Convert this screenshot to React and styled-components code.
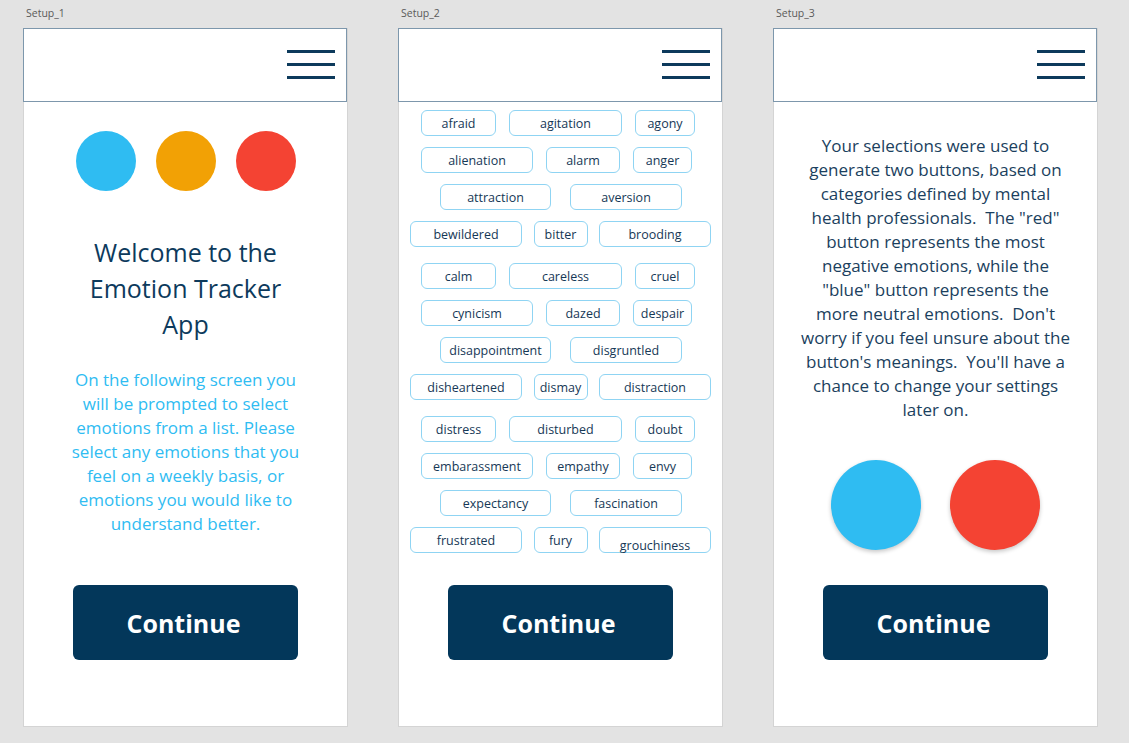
import React from "react";
import styled, { createGlobalStyle } from "styled-components";

const GlobalStyle = createGlobalStyle`
  html, body {
    margin: 0;
    padding: 0;
    background: #e3e3e3;
  }
  body {
    font-family: "Open Sans", "Noto Sans", sans-serif;
  }
`;

const navy = "#0d3a5c";
const sky = "#2fbcf2";

const emotionGroups = [
  [
    ["afraid", "agitation", "agony"],
    ["alienation", "alarm", "anger"],
    ["attraction", "aversion"],
    ["bewildered", "bitter", "brooding"],
  ],
  [
    ["calm", "careless", "cruel"],
    ["cynicism", "dazed", "despair"],
    ["disappointment", "disgruntled"],
    ["disheartened", "dismay", "distraction"],
  ],
  [
    ["distress", "disturbed", "doubt"],
    ["embarassment", "empathy", "envy"],
    ["expectancy", "fascination"],
    ["frustrated", "fury", "grouchiness"],
  ],
];

// each row pattern repeats in every group: left padding, gap, chip widths
const rowShapes = [
  { pad: 22, gap: 13, widths: [75, 113, 60] },
  { pad: 22, gap: 13, widths: [112, 74, 59] },
  { pad: 41, gap: 19, widths: [111, 112] },
  { pad: 11, gap: 11.5, widths: [112, 54, 112] },
];

function Header() {
  return (
    <TopBar>
      <Burger aria-label="menu">
        <span />
        <span />
        <span />
      </Burger>
    </TopBar>
  );
}

function ContinueButton() {
  return <Continue>Continue</Continue>;
}

function App() {
  return (
    <>
      <GlobalStyle />
      <Canvas>
        <Screen>
          <Label>Setup_1</Label>
          <Frame>
            <Header />
            <Body>
              <Dots>
                <Dot color={sky} />
                <Dot color="#f2a105" />
                <Dot color="#f44333" />
              </Dots>
              <Title>
                Welcome to the
                <br />
                Emotion Tracker
                <br />
                App
              </Title>
              <Intro>
                On the following screen you
                <br />
                will be prompted to select
                <br />
                emotions from a list. Please
                <br />
                select any emotions that you
                <br />
                feel on a weekly basis, or
                <br />
                emotions you would like to
                <br />
                understand better.
              </Intro>
              <ContinueButton />
            </Body>
          </Frame>
        </Screen>

        <Screen>
          <Label>Setup_2</Label>
          <Frame>
            <Header />
            <Body>
              <ChipList>
                {emotionGroups.map((group, gi) => (
                  <ChipGroup key={gi}>
                    {group.map((row, ri) => (
                      <ChipRow
                        key={ri}
                        pad={rowShapes[ri].pad}
                        gap={rowShapes[ri].gap}
                      >
                        {row.map((word, wi) => (
                          <Chip
                            key={word}
                            w={rowShapes[ri].widths[wi]}
                            low={word === "grouchiness"}
                          >
                            {word}
                          </Chip>
                        ))}
                      </ChipRow>
                    ))}
                  </ChipGroup>
                ))}
              </ChipList>
              <ContinueButton />
            </Body>
          </Frame>
        </Screen>

        <Screen>
          <Label>Setup_3</Label>
          <Frame>
            <Header />
            <Body>
              <Explain>
                Your selections were used to
                <br />
                generate two buttons, based on
                <br />
                categories defined by mental
                <br />
                health professionals.&nbsp; The "red"
                <br />
                button represents the most
                <br />
                negative emotions, while the
                <br />
                "blue" button represents the
                <br />
                more neutral emotions.&nbsp; Don't
                <br />
                worry if you feel unsure about the
                <br />
                button's meanings.&nbsp; You'll have a
                <br />
                chance to change your settings
                <br />
                later on.
              </Explain>
              <BigDots>
                <BigDot color={sky} />
                <BigDot color="#f44333" />
              </BigDots>
              <ContinueButton />
            </Body>
          </Frame>
        </Screen>
      </Canvas>
    </>
  );
}

const Canvas = styled.div`
  display: flex;
  gap: 50px;
  padding: 0 0 0 23px;
  height: 743px;
  box-sizing: border-box;
`;

const Screen = styled.div`
  display: flex;
  flex-direction: column;
  width: 325px;
  flex-shrink: 0;
`;

const Label = styled.div`
  height: 28px;
  box-sizing: border-box;
  padding: 6px 0 0 3px;
  font-size: 10.5px;
  line-height: 14px;
  color: #5a5a5a;
`;

const Frame = styled.div`
  height: 699px;
  box-sizing: border-box;
  background: #ffffff;
  border: 1px solid #d4d4d4;
  border-top: none;
  display: flex;
  flex-direction: column;
`;

const TopBar = styled.div`
  height: 74px;
  box-sizing: border-box;
  margin: 0 0 0 -1px;
  border: 1px solid #7d97ac;
  background: #ffffff;
  display: flex;
  justify-content: flex-end;
  padding: 21px 11px 0 0;
`;

const Burger = styled.div`
  width: 48px;
  display: flex;
  flex-direction: column;
  gap: 10px;
  span {
    display: block;
    height: 3px;
    background: ${navy};
  }
`;

const Body = styled.div`
  flex: 1;
  display: flex;
  flex-direction: column;
  align-items: center;
  padding-bottom: 66px;
`;

const Dots = styled.div`
  display: flex;
  gap: 20px;
  margin-top: 29px;
`;

const Dot = styled.div`
  width: 60px;
  height: 60px;
  border-radius: 50%;
  background: ${(p) => p.color};
`;

const Title = styled.h1`
  margin: 43px 0 0;
  font-size: 25px;
  line-height: 36px;
  font-weight: 400;
  color: ${navy};
  text-align: center;
  white-space: nowrap;
`;

const Intro = styled.p`
  margin: 26px 0 0;
  font-size: 17px;
  line-height: 24px;
  color: ${sky};
  text-align: center;
  white-space: nowrap;
`;

const Explain = styled.p`
  margin: 32px 0 0;
  font-size: 17px;
  line-height: 24px;
  color: #1b3f5e;
  text-align: center;
  white-space: nowrap;
`;

const ChipList = styled.div`
  align-self: stretch;
  display: flex;
  flex-direction: column;
  gap: 16px;
  margin-top: 8px;
`;

const ChipGroup = styled.div`
  display: flex;
  flex-direction: column;
  gap: 11px;
`;

const ChipRow = styled.div`
  display: flex;
  gap: ${(p) => p.gap}px;
  padding-left: ${(p) => p.pad}px;
`;

const Chip = styled.div`
  width: ${(p) => p.w}px;
  height: 26px;
  box-sizing: border-box;
  border: 1px solid #8fd4f3;
  border-radius: 6px;
  display: flex;
  align-items: center;
  justify-content: center;
  padding-top: ${(p) => (p.low ? 10 : 0)}px;
  font-size: 12.5px;
  color: #163856;
  white-space: nowrap;
`;

const BigDots = styled.div`
  display: flex;
  gap: 29px;
  margin-top: 38px;
`;

const BigDot = styled.div`
  width: 90px;
  height: 90px;
  border-radius: 50%;
  background: ${(p) => p.color};
  box-shadow: 0 2px 4px rgba(0, 0, 0, 0.22);
`;

const Continue = styled.button`
  margin-top: auto;
  width: 225px;
  height: 75px;
  border: none;
  border-radius: 6px;
  background: #03375a;
  color: #ffffff;
  font-family: "Open Sans", "Noto Sans", sans-serif;
  font-size: 25px;
  font-weight: 700;
  padding: 0 4px 0 0;
  cursor: pointer;
`;

export default App;
